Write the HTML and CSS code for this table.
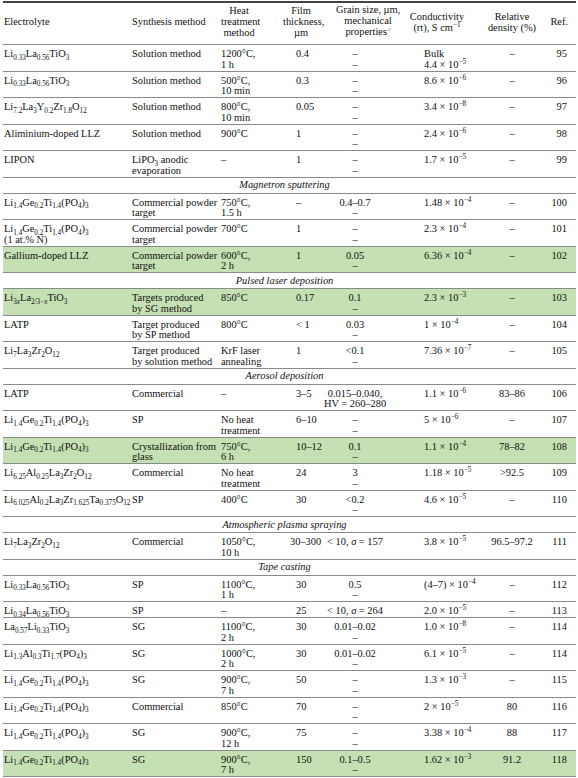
FILE: index.html
```html
<!DOCTYPE html>
<html lang="en">
<head>
<meta charset="utf-8">
<title>Thin-film solid electrolytes</title>
<link rel="stylesheet" href="styles.css">
</head>
<body>
<table class="tbl">
<colgroup>
<col class="w1"><col class="w2"><col class="w3"><col class="w4"><col class="w5"><col class="w6"><col class="w7"><col class="w8">
</colgroup>
<thead>
<tr>
<th class="h1">Electrolyte</th>
<th class="h2">Synthesis method</th>
<th class="h3">Heat<br>treatment<br>method</th>
<th class="h4">Film<br>thickness,<br>µm</th>
<th class="h5">Grain size, µm,<br>mechanical<br>properties<span class="fn">a</span></th>
<th class="h6">Conductivity<br>(rt), S cm<sup>−1</sup></th>
<th class="h7">Relative<br>density (%)</th>
<th class="h8">Ref.</th>
</tr>
</thead>
<tbody>
<tr><td class="c1">Li<sub>0.33</sub>La<sub>0.56</sub>TiO<sub>3</sub></td><td class="c2">Solution method</td><td class="c3">1200°C,<br>1 h</td><td class="c4">0.4</td><td class="c5">–<br>–</td><td class="c6">Bulk<br>4.4 × 10<sup>−5</sup></td><td class="c7">–</td><td class="c8">95</td></tr>
<tr><td class="c1">Li<sub>0.33</sub>La<sub>0.56</sub>TiO<sub>3</sub></td><td class="c2">Solution method</td><td class="c3">500°C,<br>10 min</td><td class="c4">0.3</td><td class="c5">–<br>–</td><td class="c6">8.6 × 10<sup>−6</sup></td><td class="c7">–</td><td class="c8">96</td></tr>
<tr><td class="c1">Li<sub>7.2</sub>La<sub>3</sub>Y<sub>0.2</sub>Zr<sub>1.8</sub>O<sub>12</sub></td><td class="c2">Solution method</td><td class="c3">800°C,<br>10 min</td><td class="c4">0.05</td><td class="c5">–<br>–</td><td class="c6">3.4 × 10<sup>−8</sup></td><td class="c7">–</td><td class="c8">97</td></tr>
<tr><td class="c1">Aliminium-doped LLZ</td><td class="c2">Solution method</td><td class="c3">900°C</td><td class="c4">1</td><td class="c5">–<br>–</td><td class="c6">2.4 × 10<sup>−6</sup></td><td class="c7">–</td><td class="c8">98</td></tr>
<tr><td class="c1">LIPON</td><td class="c2">LiPO<sub>3</sub> anodic<br>evaporation</td><td class="c3">–</td><td class="c4">1</td><td class="c5">–<br>–</td><td class="c6">1.7 × 10<sup>−5</sup></td><td class="c7">–</td><td class="c8">99</td></tr>
<tr><td class="sec" colspan="8">Magnetron sputtering</td></tr>
<tr><td class="c1">Li<sub>1.4</sub>Ge<sub>0.2</sub>Ti<sub>1.4</sub>(PO<sub>4</sub>)<sub>3</sub></td><td class="c2">Commercial powder<br>target</td><td class="c3">750°C,<br>1.5 h</td><td class="c4">–</td><td class="c5">0.4–0.7<br>–</td><td class="c6">1.48 × 10<sup>−4</sup></td><td class="c7">–</td><td class="c8">100</td></tr>
<tr><td class="c1">Li<sub>1.4</sub>Ge<sub>0.2</sub>Ti<sub>1.4</sub>(PO<sub>4</sub>)<sub>3</sub><br>(1 at.% N)</td><td class="c2">Commercial powder<br>target</td><td class="c3">700°C</td><td class="c4">1</td><td class="c5">–<br>–</td><td class="c6">2.3 × 10<sup>−4</sup></td><td class="c7">–</td><td class="c8">101</td></tr>
<tr class="hl"><td class="c1">Gallium-doped LLZ</td><td class="c2">Commercial powder<br>target</td><td class="c3">600°C,<br>2 h</td><td class="c4">1</td><td class="c5">0.05<br>–</td><td class="c6">6.36 × 10<sup>−4</sup></td><td class="c7">–</td><td class="c8">102</td></tr>
<tr><td class="sec" colspan="8">Pulsed laser deposition</td></tr>
<tr class="hl"><td class="c1">Li<sub>3<i>x</i></sub>La<sub>2/3−<i>x</i></sub>TiO<sub>3</sub></td><td class="c2">Targets produced<br>by SG method</td><td class="c3">850°C</td><td class="c4">0.17</td><td class="c5">0.1<br>–</td><td class="c6">2.3 × 10<sup>−3</sup></td><td class="c7">–</td><td class="c8">103</td></tr>
<tr><td class="c1">LATP</td><td class="c2">Target produced<br>by SP method</td><td class="c3">800°C</td><td class="c4">&lt; 1</td><td class="c5">0.03<br>–</td><td class="c6">1 × 10<sup>−4</sup></td><td class="c7">–</td><td class="c8">104</td></tr>
<tr><td class="c1">Li<sub>7</sub>La<sub>3</sub>Zr<sub>2</sub>O<sub>12</sub></td><td class="c2">Target produced<br>by solution method</td><td class="c3">KrF laser<br>annealing</td><td class="c4">1</td><td class="c5">&lt;0.1<br>–</td><td class="c6">7.36 × 10<sup>−7</sup></td><td class="c7">–</td><td class="c8">105</td></tr>
<tr><td class="sec" colspan="8">Aerosol deposition</td></tr>
<tr><td class="c1">LATP</td><td class="c2">Commercial</td><td class="c3">–</td><td class="c4">3–5</td><td class="c5">0.015–0.040,<br>HV = 260–280</td><td class="c6">1.1 × 10<sup>−6</sup></td><td class="c7">83–86</td><td class="c8">106</td></tr>
<tr><td class="c1">Li<sub>1.4</sub>Ge<sub>0.2</sub>Ti<sub>1.4</sub>(PO<sub>4</sub>)<sub>3</sub></td><td class="c2">SP</td><td class="c3">No heat<br>treatment</td><td class="c4">6–10</td><td class="c5">–<br>–</td><td class="c6">5 × 10<sup>−6</sup></td><td class="c7">–</td><td class="c8">107</td></tr>
<tr class="hl"><td class="c1">Li<sub>1.4</sub>Ge<sub>0.2</sub>Ti<sub>1.4</sub>(PO<sub>4</sub>)<sub>3</sub></td><td class="c2">Crystallization from<br>glass</td><td class="c3">750°C,<br>6 h</td><td class="c4">10–12</td><td class="c5">0.1<br>–</td><td class="c6">1.1 × 10<sup>−4</sup></td><td class="c7">78–82</td><td class="c8">108</td></tr>
<tr><td class="c1">Li<sub>6.25</sub>Al<sub>0.25</sub>La<sub>3</sub>Zr<sub>2</sub>O<sub>12</sub></td><td class="c2">Commercial</td><td class="c3">No heat<br>treatment</td><td class="c4">24</td><td class="c5">3<br>–</td><td class="c6">1.18 × 10<sup>−5</sup></td><td class="c7">&gt;92.5</td><td class="c8">109</td></tr>
<tr><td class="c1">Li<sub>6.025</sub>Al<sub>0.2</sub>La<sub>3</sub>Zr<sub>1.625</sub>Ta<sub>0.375</sub>O<sub>12</sub></td><td class="c2">SP</td><td class="c3">400°C</td><td class="c4">30</td><td class="c5">&lt;0.2<br>–</td><td class="c6">4.6 × 10<sup>−5</sup></td><td class="c7">–</td><td class="c8">110</td></tr>
<tr><td class="sec" colspan="8">Atmospheric plasma spraying</td></tr>
<tr><td class="c1">Li<sub>7</sub>La<sub>3</sub>Zr<sub>2</sub>O<sub>12</sub></td><td class="c2">Commercial</td><td class="c3">1050°C,<br>10 h</td><td class="c4 wide">30–300</td><td class="c5">&lt; 10, <i>σ</i> = 157</td><td class="c6">3.8 × 10<sup>−5</sup></td><td class="c7">96.5–97.2</td><td class="c8">111</td></tr>
<tr><td class="sec" colspan="8">Tape casting</td></tr>
<tr><td class="c1">Li<sub>0.33</sub>La<sub>0.56</sub>TiO<sub>3</sub></td><td class="c2">SP</td><td class="c3">1100°C,<br>1 h</td><td class="c4">30</td><td class="c5">0.5<br>–</td><td class="c6">(4–7) × 10<sup>−4</sup></td><td class="c7">–</td><td class="c8">112</td></tr>
<tr><td class="c1">Li<sub>0.34</sub>La<sub>0.56</sub>TiO<sub>3</sub></td><td class="c2">SP</td><td class="c3">–</td><td class="c4">25</td><td class="c5">&lt; 10, <i>σ</i> = 264</td><td class="c6">2.0 × 10<sup>−5</sup></td><td class="c7">–</td><td class="c8">113</td></tr>
<tr><td class="c1">La<sub>0.57</sub>Li<sub>0.33</sub>TiO<sub>3</sub></td><td class="c2">SG</td><td class="c3">1100°C,<br>2 h</td><td class="c4">30</td><td class="c5">0.01–0.02<br>–</td><td class="c6">1.0 × 10<sup>−8</sup></td><td class="c7">–</td><td class="c8">114</td></tr>
<tr><td class="c1">Li<sub>1.3</sub>Al<sub>0.3</sub>Ti<sub>1.7</sub>(PO<sub>4</sub>)<sub>3</sub></td><td class="c2">SG</td><td class="c3">1000°C,<br>2 h</td><td class="c4">30</td><td class="c5">0.01–0.02<br>–</td><td class="c6">6.1 × 10<sup>−5</sup></td><td class="c7">–</td><td class="c8">114</td></tr>
<tr><td class="c1">Li<sub>1.4</sub>Ge<sub>0.2</sub>Ti<sub>1.4</sub>(PO<sub>4</sub>)<sub>3</sub></td><td class="c2">SG</td><td class="c3">900°C,<br>7 h</td><td class="c4">50</td><td class="c5">–<br>–</td><td class="c6">1.3 × 10<sup>−3</sup></td><td class="c7">–</td><td class="c8">115</td></tr>
<tr><td class="c1">Li<sub>1.4</sub>Ge<sub>0.2</sub>Ti<sub>1.4</sub>(PO<sub>4</sub>)<sub>3</sub></td><td class="c2">Commercial</td><td class="c3">850°C</td><td class="c4">70</td><td class="c5">–<br>–</td><td class="c6">2 × 10<sup>−5</sup></td><td class="c7">80</td><td class="c8">116</td></tr>
<tr><td class="c1">Li<sub>1.4</sub>Ge<sub>0.2</sub>Ti<sub>1.4</sub>(PO<sub>4</sub>)<sub>3</sub></td><td class="c2">SG</td><td class="c3">900°C,<br>12 h</td><td class="c4">75</td><td class="c5">–<br>–</td><td class="c6">3.38 × 10<sup>−4</sup></td><td class="c7">88</td><td class="c8">117</td></tr>
<tr class="hl"><td class="c1">Li<sub>1.4</sub>Ge<sub>0.2</sub>Ti<sub>1.4</sub>(PO<sub>4</sub>)<sub>3</sub></td><td class="c2">SG</td><td class="c3">900°C,<br>7 h</td><td class="c4">150</td><td class="c5">0.1–0.5<br>–</td><td class="c6">1.62 × 10<sup>−3</sup></td><td class="c7">91.2</td><td class="c8">118</td></tr>
</tbody>
</table>
</body>
</html>
```
FILE: styles.css
```css
body {
  margin: 0;
  background: #ffffff;
  font-family: "Liberation Serif", "Times New Roman", serif;
  font-size: 10.4px;
  color: #111111;
}

.tbl {
  border-collapse: collapse;
  table-layout: fixed;
  width: 573px;
  margin: 1px 0 0 3px;
  border-top: 2px solid #444;
}

.w1 { width: 125px; }
.w2 { width: 89px; }
.w3 { width: 66px; }
.w4 { width: 39px; }
.w5 { width: 78px; }
.w6 { width: 82px; }
.w7 { width: 63px; }
.w8 { width: 31px; }

.tbl th {
  font-weight: normal;
  vertical-align: middle;
  line-height: 11px;
  padding: 1px 0 5px;
  border-bottom: 1px solid #8a8a8a;
  white-space: nowrap;
  text-align: center;
}

.tbl td {
  vertical-align: top;
  line-height: 10.5px;
  padding: 4px 0 0.5px;
  border-bottom: 1px solid #8a8a8a;
  white-space: nowrap;
}

.h1 { text-align: left !important; padding-left: 1px !important; }
.h2 { text-align: left !important; padding-left: 4px !important; }
.h3 { padding-left: 4px !important; padding-right: 26px !important; }
.h4 { padding-right: 3px !important; }
.h5 { padding-left: 14px !important; }
.h6 { padding-right: 8px !important; }
.h7 { padding-right: 3px !important; }
.h8 { text-align: right !important; padding-right: 8px !important; }

.c1 { padding-left: 1px !important; }
.c2 { padding-left: 4px !important; }
.c3 { padding-left: 4px !important; }
.c4 { padding-left: 13px !important; }
.c4.wide { padding-left: 7px !important; }
.c5 { text-align: center; padding-right: 12px !important; }
.c6 { padding-left: 24px !important; }
.c7 { text-align: center; padding-right: 3px !important; }
.c8 { text-align: right; padding-right: 9px !important; }

.tbl td.sec {
  font-style: italic;
  text-align: center;
  padding: 2.5px 10px 2px 0;
}

.hl td { background: #c5e0b3; }

sub, sup {
  font-size: 7.2px;
  line-height: 0;
  position: relative;
  vertical-align: baseline;
}
sub { top: 2.5px; }
sup { top: -3.8px; }

.fn {
  font-size: 6px;
  position: relative;
  top: -4px;
  color: #7a9cc4;
  margin-left: 1px;
}
```
